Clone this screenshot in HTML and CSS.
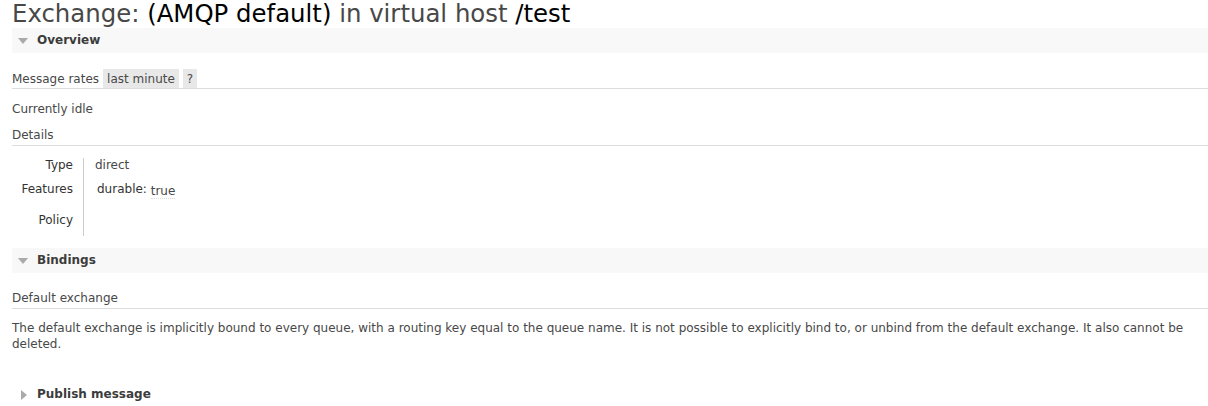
FILE: index.html
```html
<!DOCTYPE html>
<html>
<head>
<meta charset="utf-8">
<link rel="stylesheet" href="styles.css">
</head>
<body>
<div class="main">
  <h1>Exchange: <b>(AMQP default)</b> in virtual host <b>/test</b></h1>

  <div class="section">
    <h2 class="sec-head"><span class="tri down"></span>Overview</h2>
    <div class="sec-body">
      <h3 class="sub rates">Message rates <span class="btn">last minute</span> <span class="btn">?</span></h3>
      <p class="idle">Currently idle</p>
      <h3 class="sub details">Details</h3>
      <table class="facts">
        <tr><th>Type</th><td>direct</td></tr>
        <tr><th>Features</th><td><span class="fk">durable:</span> <abbr class="fv">true</abbr></td></tr>
        <tr class="last"><th>Policy</th><td></td></tr>
      </table>
    </div>
  </div>

  <div class="section">
    <h2 class="sec-head"><span class="tri down"></span>Bindings</h2>
    <div class="sec-body">
      <h3 class="sub">Default exchange</h3>
      <p class="desc">The default exchange is implicitly bound to every queue, with a routing key equal to the queue name. It is not possible to explicitly bind to, or unbind from the default exchange. It also cannot be deleted.</p>
    </div>
  </div>

  <div class="section collapsed">
    <h2 class="sec-head"><span class="tri right"></span>Publish message</h2>
  </div>
</div>
</body>
</html>
```

FILE: styles.css
```css
html, body {
  margin: 0;
  padding: 0;
  background: #fff;
}
body {
  font-family: "DejaVu Sans", Verdana, sans-serif;
  font-size: 12px;
  color: #484848;
}
.main {
  padding-left: 12px;
}
h1 {
  margin: 0;
  font-size: 24.4px;
  font-weight: normal;
  line-height: 28px;
  color: #484848;
  height: 28px;
}
h1 b {
  font-weight: normal;
  color: #000;
}
.sec-head {
  margin: 0;
  height: 25px;
  line-height: 25px;
  background: #f8f8f8;
  font-size: 12px;
  font-weight: bold;
  color: #3c3c3c;
  display: flex;
  align-items: center;
}
.collapsed .sec-head {
  background: #fff;
}
.tri {
  width: 0;
  height: 0;
  margin-left: 6px;
  margin-right: 9px;
}
.tri.down {
  border-left: 5px solid transparent;
  border-right: 5px solid transparent;
  border-top: 6px solid #aaa;
}
.tri.right {
  margin-left: 9px;
  margin-right: 10px;
  border-top: 5px solid transparent;
  border-bottom: 5px solid transparent;
  border-left: 6px solid #aaa;
}
.sec-body {
  padding-top: 15px;
}
.sub {
  margin: 0;
  font-size: 12px;
  font-weight: normal;
  border-bottom: 1px solid #ddd;
  display: flex;
  align-items: stretch;
  padding-top: 1px;
  height: 19px;
  line-height: 19px;
}
.sub.rates {
  padding-top: 2px;
  height: 18px;
  line-height: 18px;
}
.btn {
  background: #e8e8e8;
  padding: 0 4px;
  margin-left: 4px;
  margin-top: -1px;
  height: 19px;
  line-height: 20px;
}
.idle {
  margin: 0;
  padding-top: 10px;
  line-height: 20px;
}
.details {
  margin-top: 6px;
}
.facts {
  border-collapse: collapse;
  margin-top: 12px;
  margin-bottom: 12px;
}
.facts th {
  text-align: right;
  font-weight: normal;
  width: 61px;
  padding: 0 10px 0 0;
  vertical-align: top;
  height: 24px;
  line-height: 14px;
  color: #333;
}
.facts td {
  border-left: 1px solid #ccc;
  padding: 0 0 0 11px;
  vertical-align: top;
  height: 24px;
  line-height: 14px;
}
.facts tr.last th, .facts tr.last td {
  height: 23px;
  padding-top: 7px;
}
.fk {
  margin-left: 2px;
  color: #333;
}
.fv {
  text-decoration: none;
  border-bottom: 1px dotted #ddd;
  position: relative;
  top: 2px;
}
.desc {
  margin: 0;
  padding-top: 11px;
  line-height: 16px;
  padding-right: 12px;
  height: 62px;
}
```
